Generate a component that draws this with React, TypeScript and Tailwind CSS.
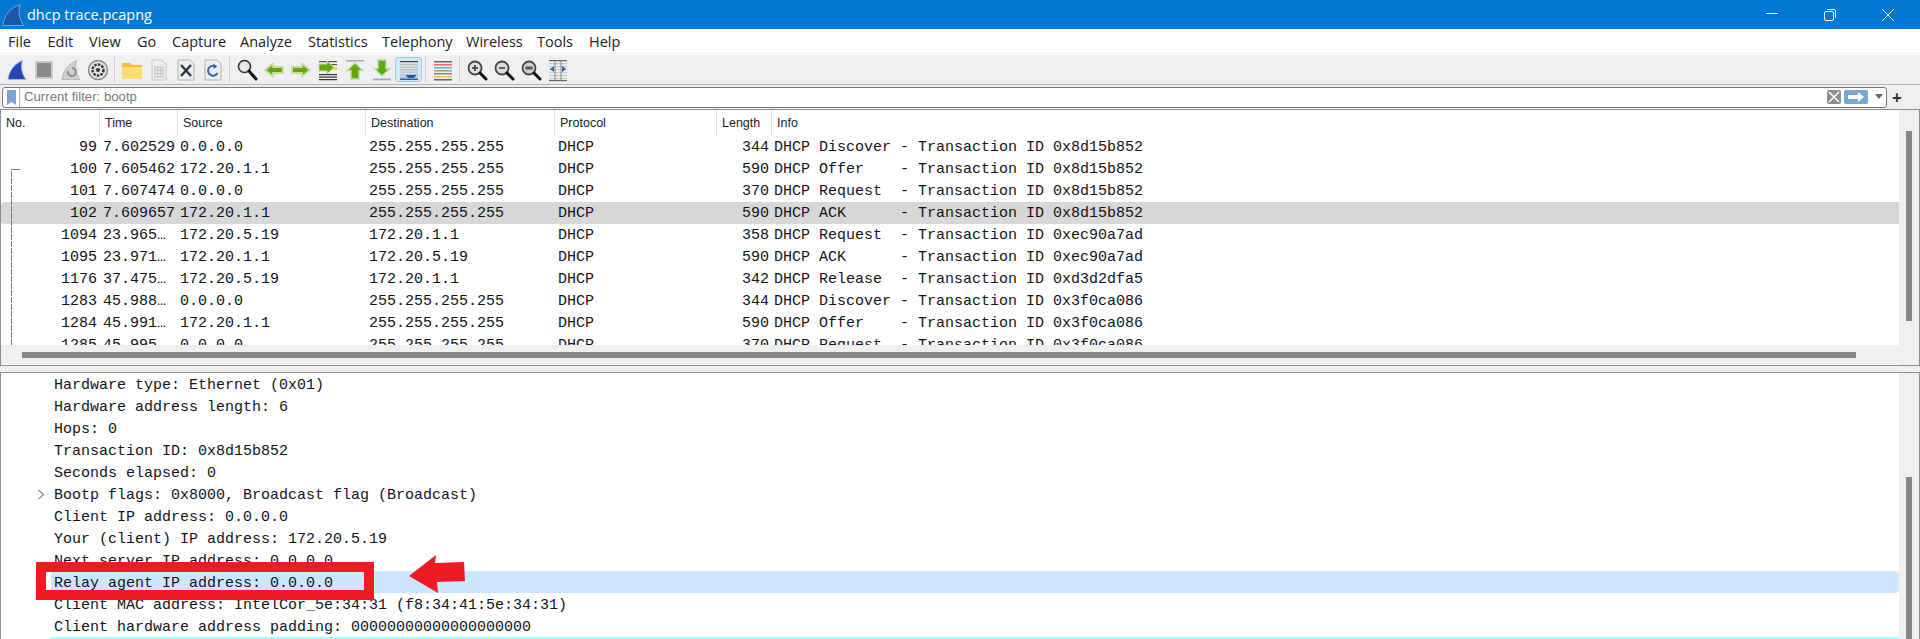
import React from "react";

const sans = "font-['Open_Sans','Noto_Sans',sans-serif]";
const packets = [
  ["99", "7.602529", "0.0.0.0", "255.255.255.255", "344", "DHCP Discover - Transaction ID 0x8d15b852"],
  ["100", "7.605462", "172.20.1.1", "255.255.255.255", "590", "DHCP Offer    - Transaction ID 0x8d15b852"],
  ["101", "7.607474", "0.0.0.0", "255.255.255.255", "370", "DHCP Request  - Transaction ID 0x8d15b852"],
  ["102", "7.609657", "172.20.1.1", "255.255.255.255", "590", "DHCP ACK      - Transaction ID 0x8d15b852"],
  ["1094", "23.965…", "172.20.5.19", "172.20.1.1", "358", "DHCP Request  - Transaction ID 0xec90a7ad"],
  ["1095", "23.971…", "172.20.1.1", "172.20.5.19", "590", "DHCP ACK      - Transaction ID 0xec90a7ad"],
  ["1176", "37.475…", "172.20.5.19", "172.20.1.1", "342", "DHCP Release  - Transaction ID 0xd3d2dfa5"],
  ["1283", "45.988…", "0.0.0.0", "255.255.255.255", "344", "DHCP Discover - Transaction ID 0x3f0ca086"],
  ["1284", "45.991…", "172.20.1.1", "255.255.255.255", "590", "DHCP Offer    - Transaction ID 0x3f0ca086"],
  ["1285", "45.995…", "0.0.0.0", "255.255.255.255", "370", "DHCP Request  - Transaction ID 0x3f0ca086"],
];
const details = [
  "Hardware type: Ethernet (0x01)",
  "Hardware address length: 6",
  "Hops: 0",
  "Transaction ID: 0x8d15b852",
  "Seconds elapsed: 0",
  "Bootp flags: 0x8000, Broadcast flag (Broadcast)",
  "Client IP address: 0.0.0.0",
  "Your (client) IP address: 172.20.5.19",
  "Next server IP address: 0.0.0.0",
  "Relay agent IP address: 0.0.0.0",
  "Client MAC address: IntelCor_5e:34:31 (f8:34:41:5e:34:31)",
  "Client hardware address padding: 00000000000000000000",
];
const menus = [
  ["File", "w-[39.5px]"],
  ["Edit", "w-[41.5px]"],
  ["View", "w-[48px]"],
  ["Go", "w-[35px]"],
  ["Capture", "w-[68px]"],
  ["Analyze", "w-[68px]"],
  ["Statistics", "w-[74px]"],
  ["Telephony", "w-[84px]"],
  ["Wireless", "w-[71px]"],
  ["Tools", "w-[52px]"],
  ["Help", "w-[40px]"],
];

function Ico({ children, active }: { children: React.ReactNode; active?: boolean }) {
  return (
    <div className={active ? "w-[27px] h-[25px] flex items-center justify-center rounded-[3px] bg-[#d3e7f8] border border-[#9ccbf2]" : "w-[27px] h-[25px] flex items-center justify-center"}>
      <svg width="24" height="24" viewBox="0 0 24 24">{children}</svg>
    </div>
  );
}
const Sep = () => (
  <div className="w-[7px] h-[25px] flex justify-center">
    <div className="w-px h-full bg-[#cfcfcf]" />
  </div>
);
const Lines = ({ ys, c = "#555" }: { ys: number[]; c?: string }) => (
  <>{ys.map((y) => <rect key={y} x="3" y={y} width="18" height="1.2" fill={c} />)}</>
);

function Toolbar() {
  return (
    <div className="h-[30px] bg-[#efefef] border-b border-[#b4b4b4] pl-[3px] flex items-center">
      <Ico><path d="M3 21.5C4 13 9 6 17.5 2.5 15.5 9 17 16 21 21.5Z" fill="#2546b8" stroke="#a9b6d8" /></Ico>
      <Ico><rect x="4" y="4" width="16" height="16" fill="#8a8a8a" stroke="#c9c9c9" strokeWidth="2" /></Ico>
      <Ico>
        <path d="M3 21.5C4 13 9 6 17.5 2.5 15.5 9 17 16 21 21.5Z" fill="#d0d0d0" stroke="#b8b8b8" />
        <path d="M9 13a4 4 0 1 0 4-3" fill="none" stroke="#8b8b8b" strokeWidth="2" />
      </Ico>
      <Ico>
        <circle cx="12" cy="12" r="9.5" fill="#e3e3e3" stroke="#8c8c8c" strokeWidth="1.5" />
        <circle cx="12" cy="12" r="5.5" fill="none" stroke="#333" strokeWidth="2.4" strokeDasharray="2.4 1.2" />
        <circle cx="12" cy="12" r="2" fill="#333" />
      </Ico>
      <Sep />
      <Ico>
        <path d="M2 5h8l2 2h10v14H2Z" fill="#f6b73c" />
        <rect x="2" y="9" width="20" height="12" fill="#fddc75" />
      </Ico>
      <Ico>
        <path d="M5 2h10l4 4v16H5Z" fill="#ececec" stroke="#c8c8c8" />
        <path d="M8 9h8v10H8ZM8 12.3h8M8 15.6h8M10.6 9v10M13.3 9v10" fill="none" stroke="#c4c4c4" />
      </Ico>
      <Ico>
        <path d="M4 2h12l4 4v16H4Z" fill="#e9eef2" stroke="#b4b4a4" />
        <path d="M7 7l10 11M17 7L7 18" stroke="#333" strokeWidth="2.4" />
      </Ico>
      <Ico>
        <path d="M4 2h12l4 4v16H4Z" fill="#e9eef2" stroke="#b4b4a4" />
        <path d="M15.5 9a5 5 0 1 0 1 6" fill="none" stroke="#2f68b5" strokeWidth="2" />
        <path d="M12 5.5l4 3-3.4 2.5Z" fill="#2f68b5" />
      </Ico>
      <Sep />
      <Ico>
        <circle cx="9.5" cy="8.5" r="6" fill="#e7e7e7" stroke="#333" strokeWidth="1.6" />
        <path d="M14 13l7 8" stroke="#111" strokeWidth="3" strokeLinecap="round" />
      </Ico>
      <Ico><path d="M3 12l8-6.5V9h10v6H11v3.5Z" fill="#5fa810" stroke="#c4dda8" strokeWidth="2" strokeLinejoin="round" /></Ico>
      <Ico><path d="M21 12l-8-6.5V9H3v6h10v3.5Z" fill="#5fa810" stroke="#c4dda8" strokeWidth="2" strokeLinejoin="round" /></Ico>
      <Ico>
        <Lines ys={[3, 6]} />
        <rect x="14" y="9" width="7" height="3" fill="#f0d43a" />
        <Lines ys={[16, 18.5, 21]} c="#333" />
        <path d="M3 6h8V3l7 6.5-7 6.5v-3H3Z" fill="#5fa810" stroke="#c4dda8" />
      </Ico>
      <Ico>
        <rect x="3" y="2" width="18" height="1.5" fill="#aaa" />
        <path d="M12 5l8 7.5h-4V21H8v-8.5H4Z" fill="#5fa810" stroke="#c4dda8" strokeWidth="1.4" />
      </Ico>
      <Ico>
        <rect x="3" y="20.5" width="18" height="1.8" fill="#aaa" />
        <path d="M12 18l8-7.5h-4V2H8v8.5H4Z" fill="#5fa810" stroke="#c4dda8" strokeWidth="1.4" />
      </Ico>
      <Ico active>
        <Lines ys={[3]} c="#444" />
        <Lines ys={[6, 8.5, 11, 13.5, 16, 18.5]} c="#b9b9b9" />
        <path d="M8.5 17h11l-2.5 3h-6Z" fill="#245fae" />
        <rect x="3" y="20.5" width="18" height="1.5" fill="#245fae" />
      </Ico>
      <Sep />
      <Ico>
        <rect x="3" y="3" width="18" height="1.5" fill="#666" />
        <rect x="3" y="6" width="18" height="1.5" fill="#e66" />
        <rect x="3" y="9" width="18" height="1.5" fill="#7ba7e0" />
        <rect x="3" y="12" width="18" height="1.5" fill="#7bc043" />
        <rect x="3" y="15" width="18" height="1.5" fill="#888" />
        <rect x="3" y="18" width="18" height="1.5" fill="#e6c33c" />
        <rect x="3" y="21" width="18" height="1.5" fill="#666" />
      </Ico>
      <Sep />
      <Ico>
        <circle cx="10" cy="10" r="6.5" fill="#dedede" stroke="#444" strokeWidth="1.8" />
        <path d="M7 10h6M10 7v6" stroke="#333" strokeWidth="1.5" />
        <path d="M15 15l6 6" stroke="#111" strokeWidth="3" strokeLinecap="round" />
      </Ico>
      <Ico>
        <circle cx="10" cy="10" r="6.5" fill="#dedede" stroke="#444" strokeWidth="1.8" />
        <path d="M7 10h6" stroke="#333" strokeWidth="1.5" />
        <path d="M15 15l6 6" stroke="#111" strokeWidth="3" strokeLinecap="round" />
      </Ico>
      <Ico>
        <circle cx="10" cy="10" r="6.5" fill="#cfcfcf" stroke="#444" strokeWidth="1.8" />
        <rect x="6.5" y="8.5" width="7" height="3" fill="#555" />
        <path d="M15 15l6 6" stroke="#111" strokeWidth="3" strokeLinecap="round" />
      </Ico>
      <Ico>
        <Lines ys={[2, 22]} c="#666" />
        <Lines ys={[5, 8, 11, 14, 17, 20]} c="#c8c8c8" />
        <path d="M9 3v19M15 3v19" stroke="#888" />
        <path d="M4 11l4-3v6ZM20 11l-4-3v6Z" fill="#2a66b6" />
      </Ico>
    </div>
  );
}

const cols = "grid grid-cols-[99px_78px_188px_189px_162px_55px_1fr]";

export default function App() {
  return (
    <div className={`w-[1920px] h-[639px] overflow-hidden bg-[#efefef] flex flex-col relative ${sans}`}>
      <div className="h-[29px] bg-[#0078d4] flex items-center text-white shrink-0">
        <svg width="24" height="24" viewBox="0 0 24 24" className="ml-[2px]">
          <path d="M1 22.5C2 12 8 5 18 1.500c-2 7-1 15 4 21Z" fill="#1f56a6" stroke="#8fb4de" strokeWidth="0.8" />
        </svg>
        <span className="ml-[1px] text-[14.5px]">dhcp trace.pcapng</span>
        <div className="ml-auto flex items-center">
          <div className="w-[58px] h-[29px] flex items-center justify-center">
            <div className="w-3 h-px bg-white -translate-y-[1px]" />
          </div>
          <div className="w-[58px] h-[29px] flex items-center justify-center">
            <svg width="14" height="14" viewBox="0 0 14 14" fill="none" stroke="white">
              <rect x="1.5" y="3.5" width="9" height="9" rx="1.5" />
              <path d="M4 1.500h7a1.500 1.500 0 0 1 1.500 1.500v7" />
            </svg>
          </div>
          <div className="w-[58px] h-[29px] flex items-center justify-center mr-[3px]">
            <svg width="14" height="14" viewBox="0 0 14 14" stroke="white"><path d="M1 1l12 12M13 1L1 13" /></svg>
          </div>
        </div>
      </div>
      <div className="h-[25px] bg-white flex items-center pl-[8px] pt-[1px] text-[14.5px] text-[#222] shrink-0 border-b border-[#f2f2f2]">
        {menus.map(([m, w]) => <span key={m} className={w}>{m}</span>)}
      </div>
      <div className="h-px bg-white shrink-0" />
      <Toolbar />
      <div className="h-[23px] flex items-center pl-[2px] pr-[18px] gap-[5px] shrink-0 pt-[1px]">
        <div className="flex-1 h-[21px] bg-white border border-[#777] rounded-[3px] flex items-center">
          <div className="w-[17px] h-full border-r border-[#b5b5b5] flex items-center justify-center shrink-0">
            <svg width="9" height="15" viewBox="0 0 9 15"><path d="M0 0h9v15L4.500 12 0 15Z" fill="#7ba5d6" /></svg>
          </div>
          <span className="ml-[4px] text-[13.2px] text-[#7a7a7a] font-['Liberation_Sans',sans-serif]">Current filter: bootp</span>
          <div className="ml-auto flex items-center">
            <div className="w-[14px] h-[14px] rounded-[2px] bg-[#8e8e8a] flex items-center justify-center">
              <svg width="12" height="12" viewBox="0 0 12 12" stroke="white" strokeWidth="1.5"><path d="M1 1l10 10M11 1L1 11" /></svg>
            </div>
            <div className="ml-[3px] w-[24px] h-[14px] rounded-[2px] bg-[#7ba5d6] flex items-center justify-center">
              <svg width="18" height="10" viewBox="0 0 18 10" fill="white"><path d="M1 3h10V0l6 5-6 5V7H1Z" /></svg>
            </div>
            <svg width="10" height="6" viewBox="0 0 10 6" className="ml-[6px] mr-[2px]"><path d="M1 0h8L5 5Z" fill="#666" /></svg>
          </div>
        </div>
        <span className="text-[17px] leading-none font-bold text-[#333] w-[10px]">+</span>
      </div>
      <div className="h-px shrink-0" />
      {/* packet list */}
      <div className="h-[257px] border border-[#8c8c98] bg-white flex shrink-0 overflow-hidden">
        <div className="flex-1 min-w-0 flex flex-col">
          <div className={`${cols} h-[26px] text-[12.5px] text-[#222] font-['Liberation_Sans',sans-serif] shrink-0`}>
            {["No.", "Time", "Source", "Destination", "Protocol", "Length", "Info"].map((c, i) => (
              <div key={c} className={`pl-[5px] flex items-center ${i === 6 ? "" : "border-r border-[#e2e2e2]"}`}>{c}</div>
            ))}
          </div>
          <div className="h-[209px] overflow-hidden relative font-['Liberation_Mono',monospace] text-[15px] text-[#12131a] whitespace-pre">
            {packets.map((p, i) => (
              <div key={p[0]} className={`${cols} h-[22px] leading-[23px] ${i === 3 ? "bg-[#d7d7d7] rounded-l-sm" : ""}`}>
                <div className="text-right pr-[3px]">{p[0]}</div>
                <div className="pl-[3px]">{p[1]}</div>
                <div className="pl-[2px]">{p[2]}</div>
                <div className="pl-[3px]">{p[3]}</div>
                <div className="pl-[3px]">DHCP</div>
                <div className="text-right pr-[3px]">{p[4]}</div>
                <div className="pl-[2px]">{p[5]}</div>
              </div>
            ))}
            <svg className="absolute left-[9px] top-0" width="12" height="209" viewBox="0 0 12 209" fill="none" stroke="#777">
              <path d="M1.5 209V33.500" strokeDasharray="6 1" />
              <path d="M1.5 33.5H10" />
            </svg>
          </div>
          <div className="h-[19px] bg-[#efefef] flex items-center shrink-0 pl-[21px] pr-[43px]">
            <div className="w-full h-[6px] bg-[#868686]" />
          </div>
        </div>
        <div className="w-[20px] bg-[#efefef] shrink-0 flex justify-center pt-[21px] pb-[44px]">
          <div className="w-[6px] h-full bg-[#868686]" />
        </div>
      </div>
      <div className="h-[6px] shrink-0" />
      {/* details */}
      <div className="flex-1 min-h-0 border border-b-0 border-[#8c8c98] bg-white flex overflow-hidden">
        <div className="flex-1 min-w-0 relative font-['Liberation_Mono',monospace] text-[15px] text-[#12131a] whitespace-pre">
          {details.map((d, i) => (
            <div key={d} className={`h-[22px] leading-[26px] pl-[53px] relative rounded-sm ${i === 9 ? "bg-[#cce6ff] ml-[50px] !pl-[3px]" : ""}`}>
              {i === 5 && (
                <svg className="absolute left-[36px] top-[6px]" width="8" height="11" viewBox="0 0 8 11" fill="none" stroke="#888" strokeWidth="1.2">
                  <path d="M1.5 1l5 4.500-5 4.500" />
                </svg>
              )}
              {d}
            </div>
          ))}
          <div className="h-[2px] ml-[50px] bg-[#a6ffff]" />
        </div>
        <div className="w-[20px] bg-[#efefef] shrink-0 flex justify-center pt-[104px]">
          <div className="w-[6px] h-full bg-[#868686]" />
        </div>
      </div>
      {/* annotation overlaid on the picture */}
      <div className="absolute left-[36px] top-[562px] w-[338px] h-[38px] border-[10px] border-[#ed1c24]" />
      <svg className="absolute left-[405px] top-[552px]" width="64" height="44" viewBox="405 552 64 44">
        <path d="M409 576 436 555 435 563 464 562 465 581 437 582 438 593Z" fill="#ed1c24" />
      </svg>
    </div>
  );
}
